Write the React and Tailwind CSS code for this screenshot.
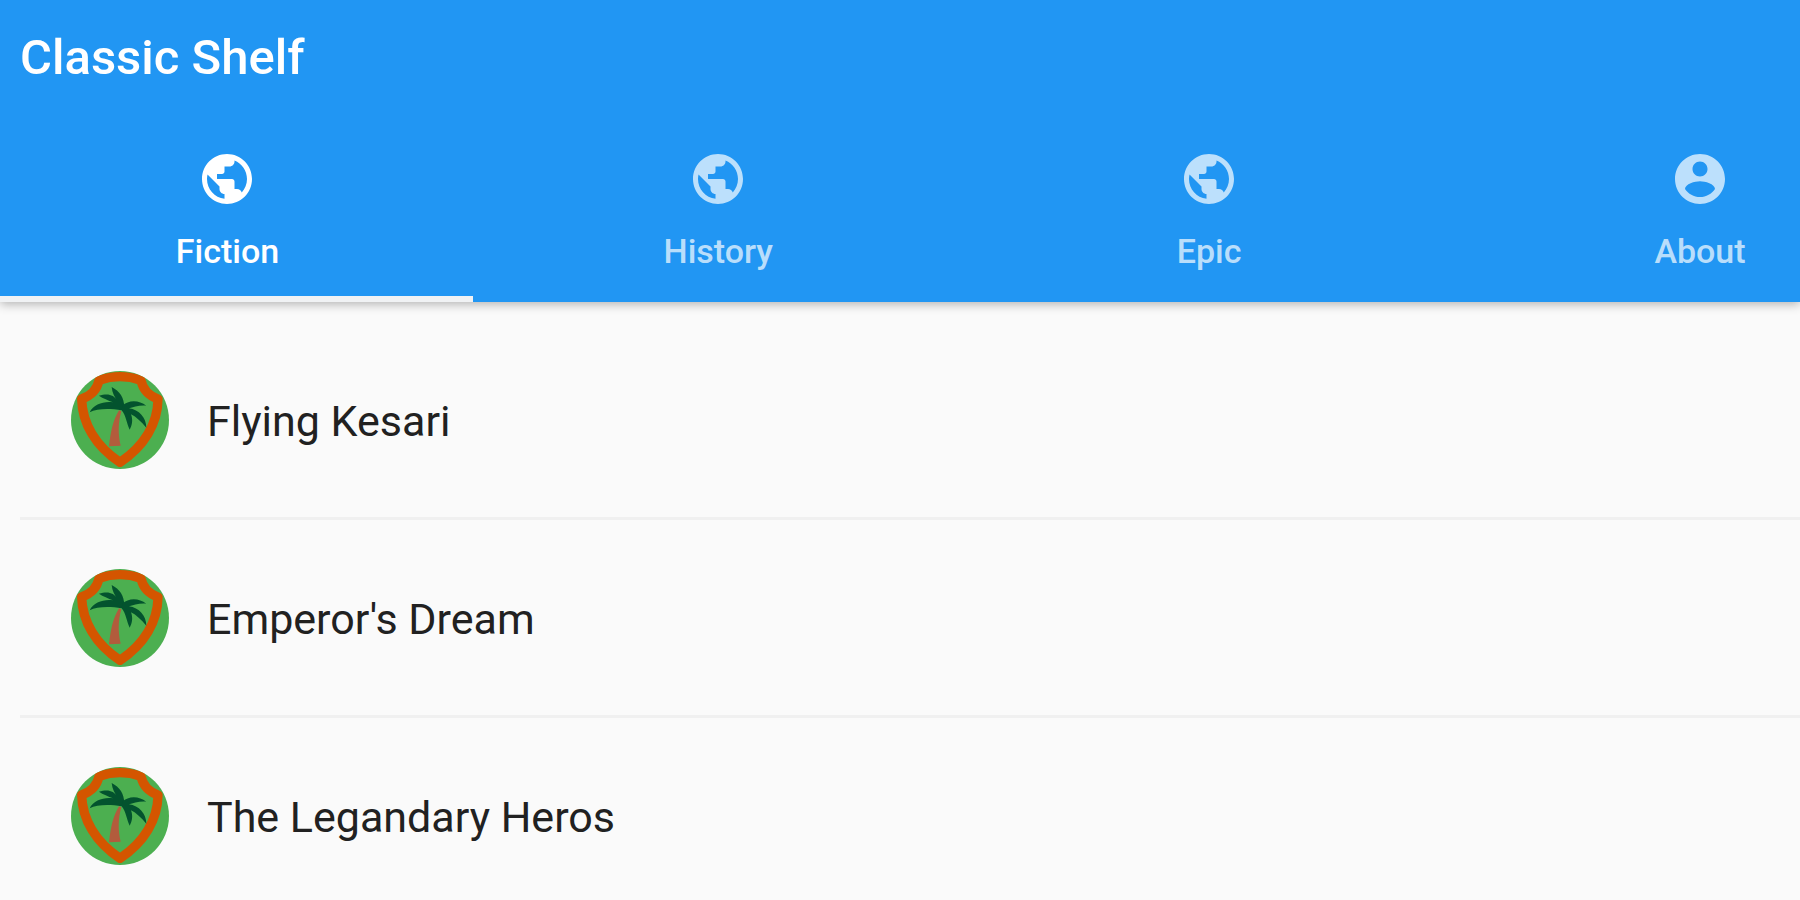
import React, { useState } from 'react';

const PublicIcon = () => (
  <svg viewBox="0 0 24 24" fill="currentColor" className="w-15 h-15" aria-hidden="true">
    <path d="M12 2C6.48 2 2 6.48 2 12s4.48 10 10 10 10-4.48 10-10S17.52 2 12 2zm-1 17.93c-3.95-.49-7-3.85-7-7.93 0-.62.08-1.21.21-1.79L9 15v1c0 1.1.9 2 2 2v1.93zm6.9-2.54c-.26-.81-1-1.39-1.9-1.39h-1v-3c0-.55-.45-1-1-1H8v-2h2c.55 0 1-.45 1-1V7h2c1.1 0 2-.9 2-2v-.41c2.93 1.19 5 4.06 5 7.41 0 2.08-.8 3.97-2.1 5.39z" />
  </svg>
);

const AccountIcon = () => (
  <svg viewBox="0 0 24 24" fill="currentColor" className="w-15 h-15" aria-hidden="true">
    <path d="M12 2C6.48 2 2 6.48 2 12s4.48 10 10 10 10-4.48 10-10S17.52 2 12 2zm0 3c1.66 0 3 1.34 3 3s-1.34 3-3 3-3-1.34-3-3 1.34-3 3-3zm0 14.2c-2.5 0-4.71-1.28-6-3.22.03-1.99 4-3.08 6-3.08 1.99 0 5.97 1.09 6 3.08-1.29 1.94-3.5 3.22-6 3.22z" />
  </svg>
);

// Palm tree inside a shield, clipped to a circle by the wrapper
const PalmAvatar = () => (
  <div className="w-[98px] h-[98px] shrink-0 rounded-full overflow-hidden bg-[#4caf50]">
    <svg viewBox="32 32 294 294" className="w-full h-full" aria-hidden="true">
      <path
        d="M116 60 Q179 38 242 60 Q250 100 293 116 C292 190 252 258 179 306 C106 258 66 190 64 116 Q108 100 116 60 Z"
        fill="none"
        stroke="#d45500"
        strokeWidth="28"
        strokeLinejoin="round"
      />
      <path d="M176 150 C160 178 152 205 146 258 L181 256 C173 222 173 188 183 153 Z" fill="#b25c3c" />
      <g fill="#03532e">
        <path d="M192 142 C192 112 178 92 154 80 C156 98 162 110 172 122 C160 102 142 98 116 106 C128 114 144 120 158 126 C130 122 100 132 88 156 C110 144 150 144 184 150 Z" />
        <path d="M186 136 C204 118 236 118 258 136 C238 134 218 140 206 144 C236 148 258 172 258 202 C242 184 228 170 212 162 C218 178 216 194 208 208 C198 188 198 168 184 150 Z" />
      </g>
    </svg>
  </div>
);

const tabs = [
  { id: 'fiction', label: 'Fiction', icon: PublicIcon },
  { id: 'history', label: 'History', icon: PublicIcon },
  { id: 'epic', label: 'Epic', icon: PublicIcon },
  { id: 'about', label: 'About', icon: AccountIcon },
];

const books = ['Flying Kesari', "Emperor's Dream", 'The Legandary Heros'];

const App = () => {
  const [activeTab, setActiveTab] = useState('fiction');

  return (
    <div className="min-h-screen bg-[#fafafa] font-['Roboto',sans-serif] overflow-x-hidden">
      <header className="bg-[#2196f3] text-white shadow-[0_2px_10px_rgba(0,0,0,0.3)]">
        <div className="flex items-center h-[116px] px-5">
          <h1 className="text-[49px] font-medium">Classic Shelf</h1>
        </div>

        <div className="overflow-hidden">
          <div role="tablist" className="flex -ml-[18px]">
            {tabs.map(({ id, label, icon: Icon }) => (
              <button
                key={id}
                role="tab"
                aria-selected={activeTab === id}
                onClick={() => setActiveTab(id)}
                className={`w-[27%] shrink-0 h-[186px] pt-[33px] flex flex-col items-center gap-6 border-b-6 ${
                  activeTab === id ? 'border-[#f0f2f4] text-white' : 'border-transparent text-white/70'
                }`}
              >
                <Icon />
                <span className="text-[34px] leading-9 font-medium">{label}</span>
              </button>
            ))}
          </div>
        </div>
      </header>

      <ul className="pt-5 pl-5">
        {books.map((book) => (
          <li
            key={book}
            className="flex items-center gap-[38px] h-[198px] pl-[51px] border-b-3 border-[#f0f0f0] last:border-transparent"
          >
            <PalmAvatar />
            <span className="pt-1 text-[43px] text-[#212121]">{book}</span>
          </li>
        ))}
      </ul>
    </div>
  );
};

export default App;
